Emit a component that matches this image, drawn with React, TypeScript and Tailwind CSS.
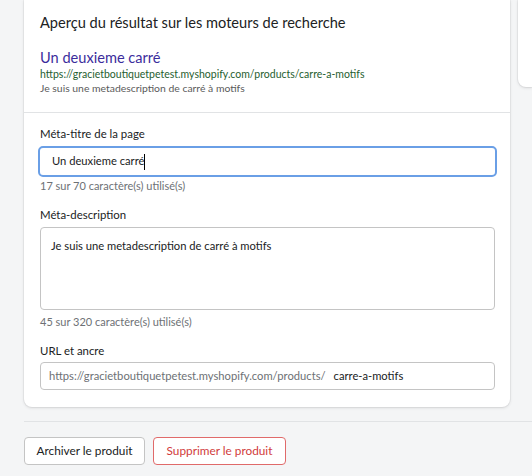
export default function App() {
  return (
    <div
      className="w-[532px] h-[476px] overflow-hidden bg-[#f4f5f6] text-[#202223]"
      style={{ fontFamily: '"Segoe UI", Lato, "Noto Sans", Arial, sans-serif' }}
    >
      <div className="flex gap-2 pl-6">
        {/* main card */}
        <div className="w-[486px] shrink-0 bg-white rounded-b-lg shadow-[0_0_0_1px_rgba(63,63,68,0.05),0_1px_3px_rgba(63,63,68,0.15)]">
          <div className="pl-4 pr-[15px] pt-[13px] pb-[17px] border-b border-[#e1e3e5]">
            <h2 className="text-[14.6px] leading-5">Aperçu du résultat sur les moteurs de recherche</h2>
            <p className="mt-4 text-[14.6px] leading-[18px] text-[#3b2d9c]">Un deuxieme carré</p>
            <p className="text-[10.5px] leading-[14px] text-[#1f5e2f]">https://gracietboutiquetpetest.myshopify.com/products/carre-a-motifs</p>
            <p className="text-[10.4px] leading-[14px] text-[#5a5a5a]">Je suis une metadescription de carré à motifs</p>
          </div>
          <div className="pl-4 pr-[15px] pt-[11px] pb-[17px] flex flex-col">
            <label className="text-[11.4px] leading-5 mb-0.5">Méta-titre de la page</label>
            <div className="-mx-0.5 h-[31px] rounded-[5px] border-2 border-[#6a9fe6] flex items-center px-3 text-[11.2px] whitespace-nowrap">
              <span>Un deuxieme carré</span>
              <span className="w-px h-4 bg-black" />
            </div>
            <p className="text-[11px] leading-4 mt-px text-[#6d7175]">17 sur 70 caractère(s) utilisé(s)</p>
            <label className="text-[11.4px] leading-5 mt-[11px]">Méta-description</label>
            <div className="mt-0.5 h-[83px] rounded border border-[#c4c4c4] px-2.5 pt-2 text-[11.2px] leading-5">
              Je suis une metadescription de carré à motifs
            </div>
            <p className="text-[11px] leading-4 mt-1 text-[#6d7175]">45 sur 320 caractère(s) utilisé(s)</p>
            <label className="text-[11.4px] leading-5 mt-[11px]">URL et ancre</label>
            <div className="mt-px h-[28px] rounded border border-[#c4c4c4] flex items-center px-2 text-[11.2px] whitespace-nowrap">
              <span className="text-[#6d7175]">https://gracietboutiquetpetest.myshopify.com/products/</span>
              <span className="ml-2">carre-a-motifs</span>
            </div>
          </div>
        </div>
        {/* side card */}
        <div className="flex-1 h-[87px] bg-white rounded-bl-lg shadow-[0_0_0_1px_rgba(63,63,68,0.05),0_1px_3px_rgba(63,63,68,0.15)]" />
      </div>
      <div className="ml-6 mt-[14px] border-t border-[#e1e3e5] pt-[15px] flex gap-2">
        <button className="w-[121px] h-[28px] rounded border border-[#c4c4c4] bg-white text-[11.8px] text-[#202223]">
          Archiver le produit
        </button>
        <button className="w-[133px] h-[28px] rounded border border-[#e06a6a] bg-white text-[11.8px] text-[#d13b3b]">
          Supprimer le produit
        </button>
      </div>
    </div>
  )
}
